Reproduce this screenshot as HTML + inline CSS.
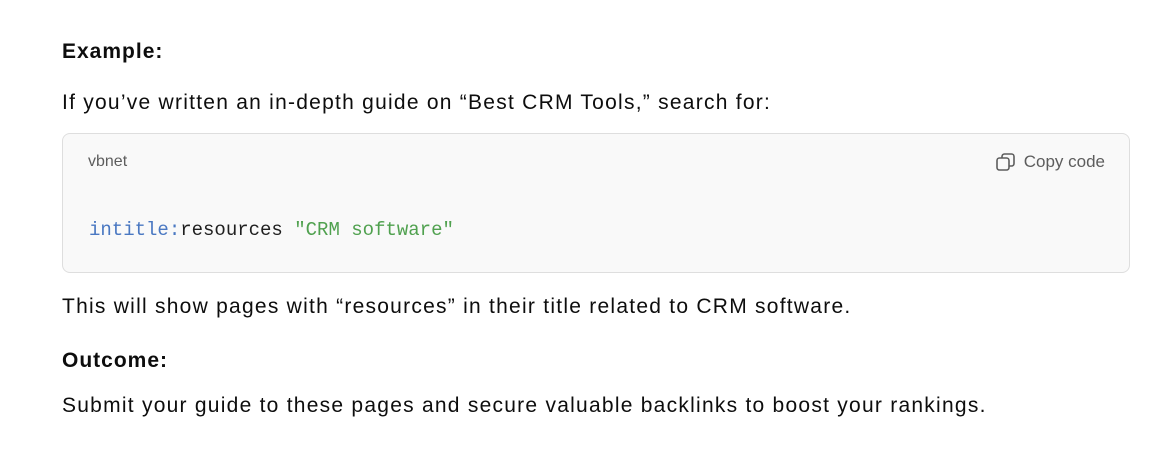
<!DOCTYPE html>
<html><head><meta charset="utf-8"><style>
body{margin:0;width:1157px;height:456px;background:#fff;font-family:"Liberation Sans",sans-serif;color:#0d0d0d;position:relative;overflow:hidden}
.t{position:absolute;left:62px;font-size:21px;letter-spacing:1.25px;white-space:nowrap;line-height:24px}
.b{font-weight:bold;letter-spacing:1px}
.code{position:absolute;left:62px;top:133px;width:1068px;height:140px;background:#f9f9f9;border:1px solid #dedede;border-radius:8px;box-sizing:border-box}
.lang{position:absolute;left:25px;top:19px;font-size:16px;color:#5d5d5d}
.copy{position:absolute;right:24px;top:17px;font-size:17px;color:#5d5d5d;display:flex;align-items:center;gap:7px}
.src{position:absolute;left:26px;top:85px;font-family:"Liberation Mono",monospace;font-size:19px;color:#1f1f1f;white-space:pre}
</style></head><body>
<div class="t b" style="top:40px">Example:</div>
<div class="t" style="top:91px">If you’ve written an in-depth guide on “Best CRM Tools,” search for:</div>
<div class="code">
<div class="lang">vbnet</div>
<div class="copy"><svg width="22" height="22" viewBox="0 0 22 22" fill="none" stroke="#5d5d5d" stroke-width="1.6"><rect x="2" y="7" width="12" height="12" rx="2.5"/><path d="M7 7V5.5A2.5 2.5 0 0 1 9.5 3h7A2.5 2.5 0 0 1 19 5.5v7a2.5 2.5 0 0 1-2.5 2.5H14"/></svg>Copy code</div>
<div class="src"><span style="color:#4a78c2">intitle:</span>resources <span style="color:#50a14f">"CRM software"</span></div>
</div>
<div class="t" style="top:295px">This will show pages with “resources” in their title related to CRM software.</div>
<div class="t b" style="top:349px">Outcome:</div>
<div class="t" style="top:394px">Submit your guide to these pages and secure valuable backlinks to boost your rankings.</div>
</body></html>
